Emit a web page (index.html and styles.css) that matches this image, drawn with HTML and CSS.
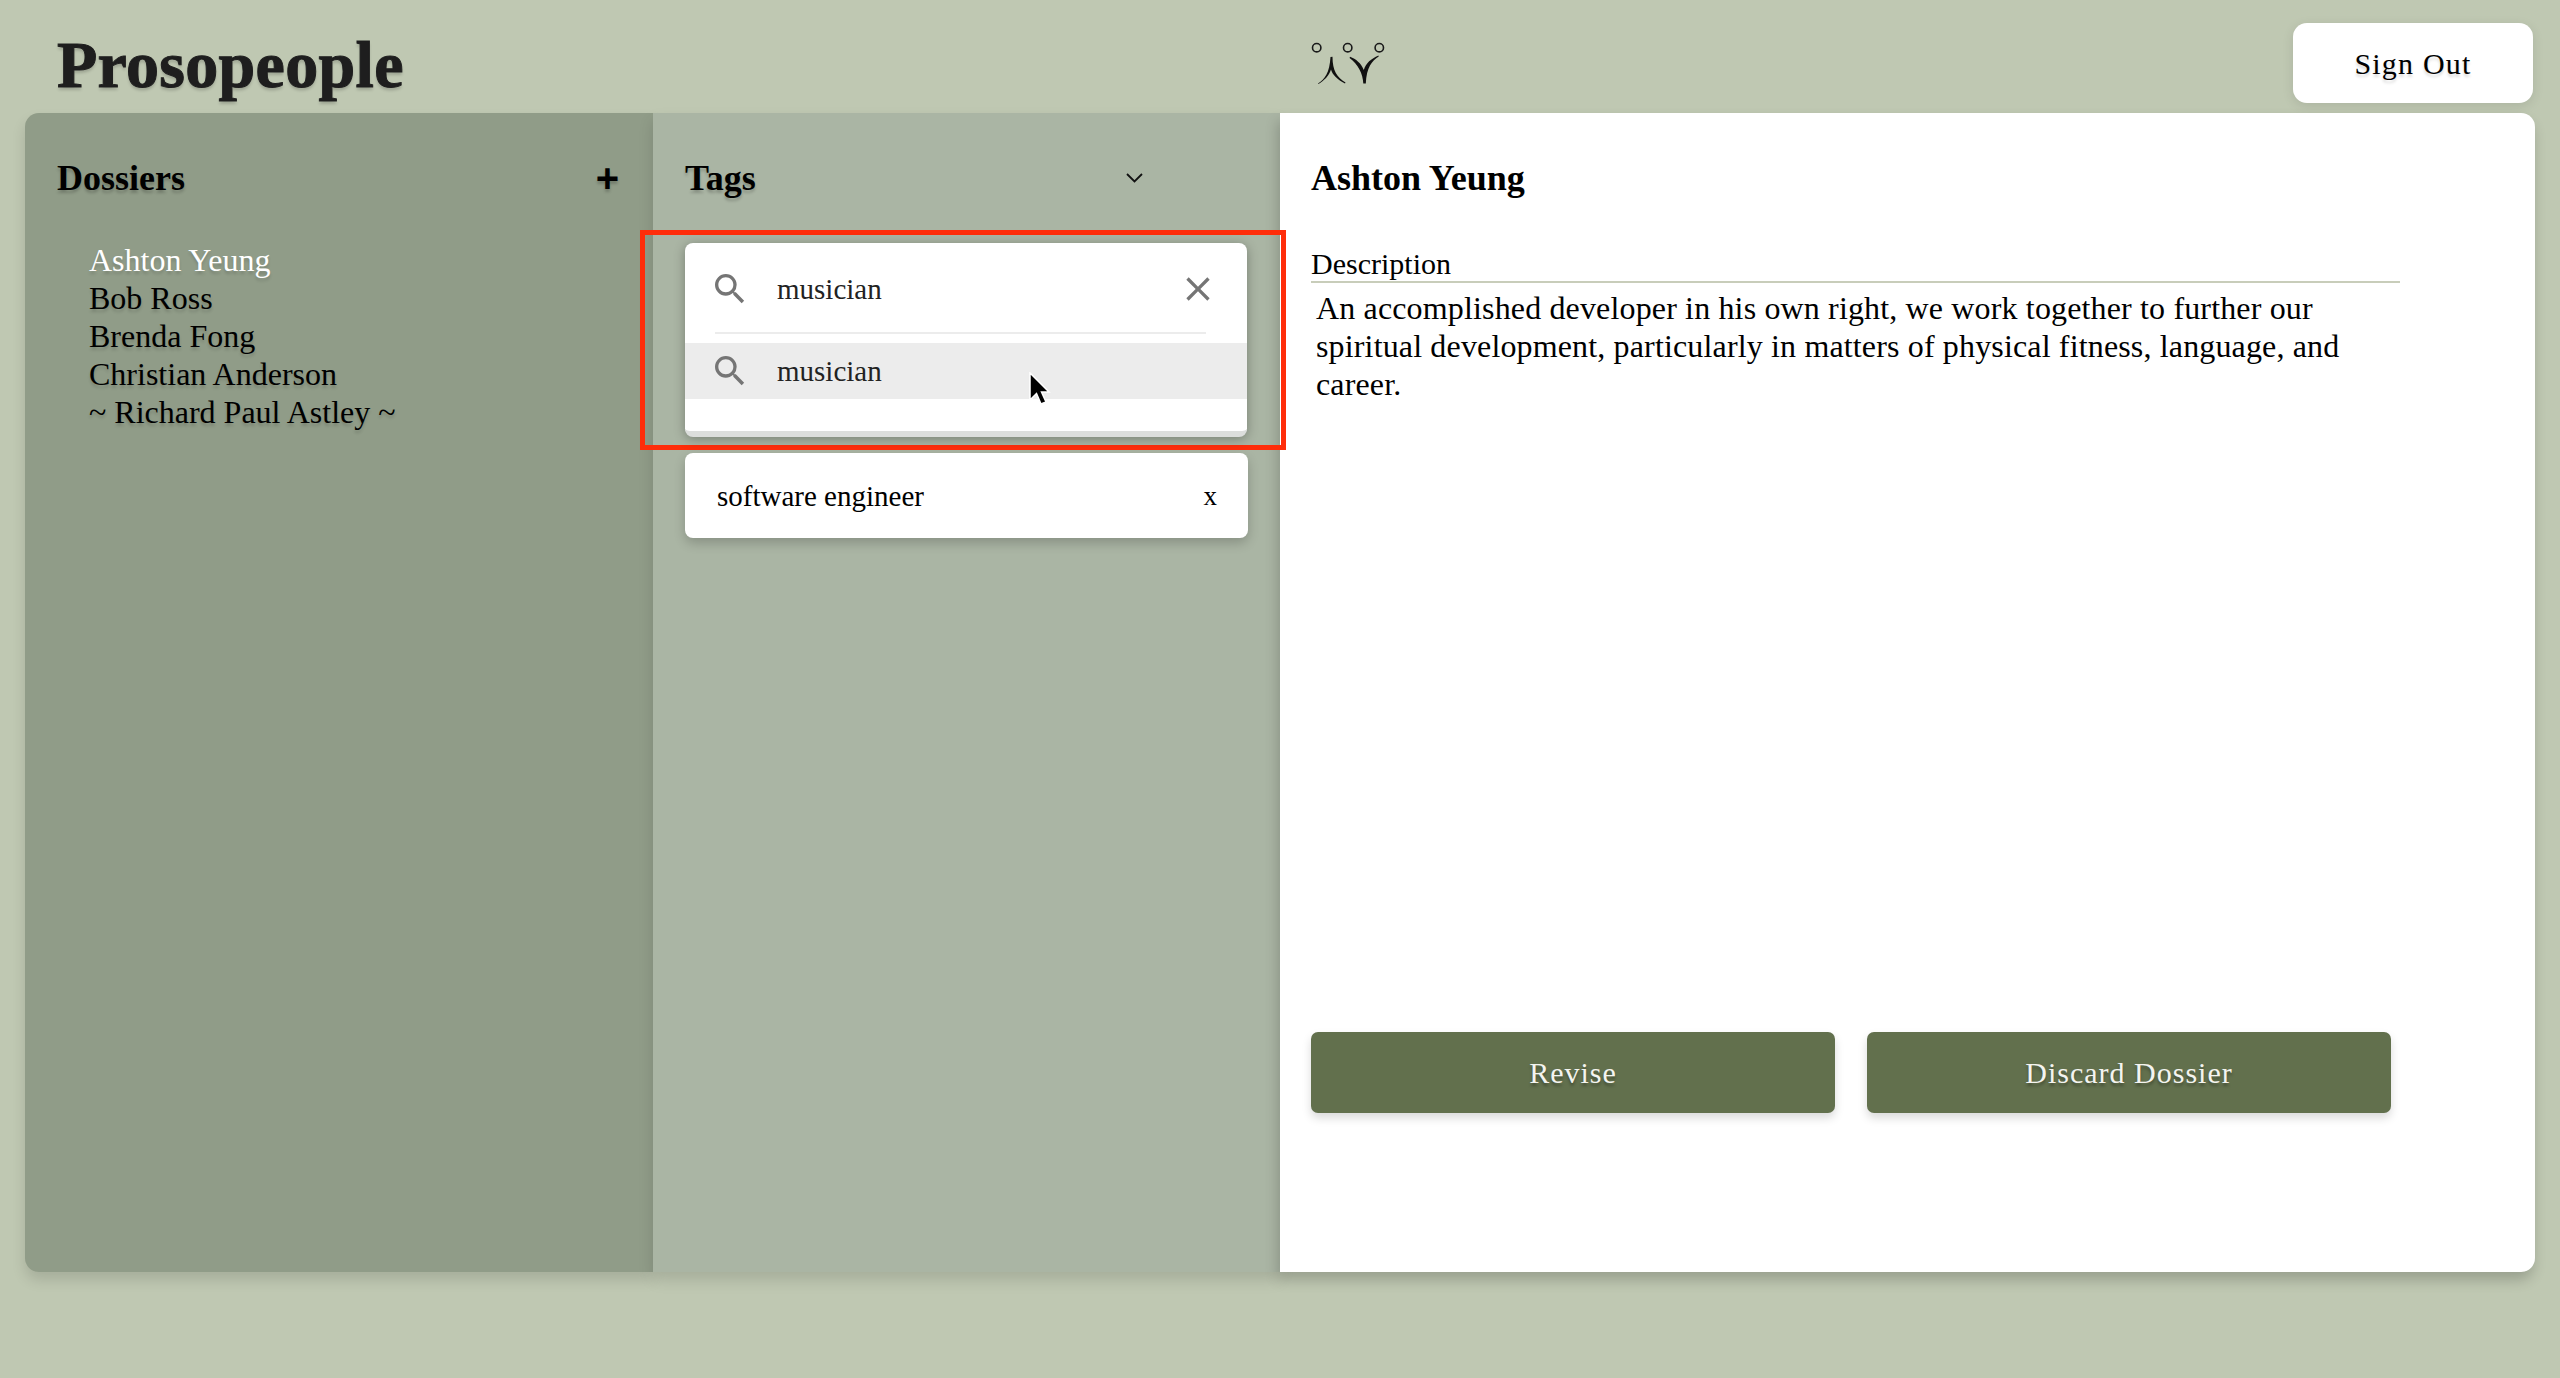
FILE: index.html
```html
<!DOCTYPE html>
<html lang="en">
<head>
  <meta charset="UTF-8" />
  <meta name="viewport" content="width=device-width, initial-scale=1.0"/>
  <title>Prosopeople</title>
  <link rel="stylesheet" href="styles.css">
</head>
<body>

  <header class="topbar">
    <h1 class="brand">Prosopeople</h1>
    <svg class="logo" width="120" height="80" viewBox="0 0 120 80">
      <g fill="none" stroke="#1a1a1a" stroke-width="1.6">
        <circle cx="28.7" cy="24.7" r="4.2"/>
        <circle cx="59.7" cy="24.7" r="4.2"/>
        <circle cx="91.3" cy="24.7" r="4.2"/>
      </g>
      <g fill="#111">
        <path d="M30 60.500C37 56 41.500 50 42.500 34L44.500 33.700C44.500 48 49 54 57.500 59.500L57 60.500C49.500 56.500 44.500 52 43 46.500C41 53 36 57.500 30.400 61Z"/>
        <path d="M62 33.700C68 36 73 40 75.800 47C78 40 83 36 90.500 32.600L90.700 33.400C84 38 78.500 44 77.800 60.500H75.300C75 51 70 41 61.600 35Z"/>
      </g>
    </svg>
    <button class="signout">Sign Out</button>
  </header>

  <main class="board">
    <!-- dossiers -->
    <section class="col col-dossiers">
      <div class="col-head">
        <h2>Dossiers</h2>
        <span class="plus">+</span>
      </div>
      <ul class="names">
        <li class="current">Ashton Yeung</li>
        <li>Bob Ross</li>
        <li>Brenda Fong</li>
        <li>Christian Anderson</li>
        <li>~ Richard Paul Astley ~</li>
      </ul>
    </section>

    <!-- tags -->
    <section class="col col-tags">
      <div class="col-head">
        <h2>Tags</h2>
        <svg class="chevron" width="17" height="10" viewBox="0 0 17 10"><path d="M1 1l7.500 7.500L16 1" fill="none" stroke="#111" stroke-width="1.800"/></svg>
      </div>
      <div class="callout">
        <div class="search">
          <div class="search-row">
            <svg class="ico" width="40" height="40" viewBox="0 0 24 24"><path d="M15.5 14h-.79l-.28-.27A6.471 6.471 0 0 0 16 9.5 6.5 6.5 0 1 0 9.5 16c1.61 0 3.09-.59 4.23-1.57l.27.28v.79l5 4.99L20.49 19l-4.99-5zm-6 0C7.01 14 5 11.99 5 9.5S7.01 5 9.5 5 14 7.01 14 9.5 11.99 14 9.5 14z"/></svg>
            <span class="query">musician</span>
            <svg class="ico" width="40" height="40" viewBox="0 0 24 24"><path d="M19 6.41L17.59 5 12 10.59 6.41 5 5 6.41 10.59 12 5 17.59 6.41 19 12 13.41 17.59 19 19 17.59 13.41 12z"/></svg>
          </div>
          <div class="suggest">
            <svg class="ico" width="40" height="40" viewBox="0 0 24 24"><path d="M15.5 14h-.79l-.28-.27A6.471 6.471 0 0 0 16 9.5 6.5 6.5 0 1 0 9.5 16c1.61 0 3.09-.59 4.23-1.57l.27.28v.79l5 4.99L20.49 19l-4.99-5zm-6 0C7.01 14 5 11.99 5 9.5S7.01 5 9.5 5 14 7.01 14 9.5 11.99 14 9.5 14z"/></svg>
            <span class="query">musician</span>
            <svg class="cursor" width="23" height="34" viewBox="0 0 23 34"><path d="M2 1v27l6.500-6.500L13 32l5-2-4.500-10H21z" stroke="#fff" stroke-width="1.500"/></svg>
          </div>
        </div>
      </div>
      <div class="tag"><span>software engineer</span><span class="tag-x">x</span></div>
    </section>

    <!-- detail -->
    <section class="col col-detail">
      <div class="col-head"><h2 class="plain">Ashton Yeung</h2></div>
      <div class="field-label">Description</div>
      <p class="field-text">An accomplished developer in his own right, we work together to further our spiritual development, particularly in matters of physical fitness, language, and career.</p>
      <div class="actions">
        <button>Revise</button>
        <button>Discard Dossier</button>
      </div>
    </section>
  </main>

</body>
</html>
```

FILE: styles.css
```css
:root {
  --page: #bfc8b2;
  --dossiers: #909c88;
  --tags: #aab5a4;
  --moss: #62704d;
  --serif: "Liberation Serif", serif;
}
* {
  box-sizing: border-box;
}
body {
  margin: 0;
  height: 1378px;
  overflow: hidden;
  background-color: var(--page);
  font-family: var(--serif);
  font-size: 32px;
  color: #000;
}
button {
  font-family: inherit;
  border: none;
  cursor: pointer;
}
.topbar {
  display: flex;
  padding: 23px 27px 10px 57px;
  height: 113px;
}
.brand {
  margin: 2px 0 0;
  width: 1231px;
  font-size: 66px;
  line-height: 80px;
  font-weight: bold;
  letter-spacing: 0.3px;
  color: #1e1e1e;
  -webkit-text-stroke: 1px #1e1e1e;
  text-shadow: 0 3px 3px rgba(0, 0, 0, 0.18);
}
.signout {
  margin-left: auto;
  width: 240px;
  height: 80px;
  padding-top: 3px;
  border-radius: 14px;
  background: white;
  font-size: 30px;
  letter-spacing: 1.2px;
  box-shadow: 0 3px 12px rgba(0, 0, 0, 0.1);
  text-shadow: 0 3px 3px rgba(0, 0, 0, 0.15);
}
.board {
  display: grid;
  grid-template-columns: 628px 627px 1fr;
  height: 1159px;
  margin: 0 25px;
}
.col {
  position: relative;
  padding: 45px 32px 0;
  box-shadow: 0 8px 14px rgba(0, 0, 0, 0.13);
}
.col-dossiers {
  background-color: var(--dossiers);
  border-radius: 14px 0 0 14px;
}
.col-tags {
  background-color: var(--tags);
}
.col-detail {
  display: flex;
  flex-direction: column;
  background-color: white;
  border-radius: 0 14px 14px 0;
  padding-left: 31px;
  box-shadow: -2px 8px 14px rgba(0, 0, 0, 0.2);
}
.col-head {
  display: flex;
  justify-content: space-between;
  align-items: center;
  height: 40px;
}
.col-head h2 {
  margin: 0;
  font-size: 36px;
  font-weight: bold;
  text-shadow: 0 3px 3px rgba(0, 0, 0, 0.2);
}
.col-head h2.plain {
  text-shadow: none;
}
.plus {
  font-family: "Liberation Sans", sans-serif;
  font-weight: bold;
  font-size: 40px;
  line-height: 40px;
  margin-right: 2px;
  text-shadow: 0 3px 3px rgba(0, 0, 0, 0.2);
}
.chevron {
  margin-right: 105px;
}
.names {
  list-style: none;
  margin: 43px 0 0;
  padding: 0 0 0 32px;
}
.names li {
  height: 38px;
  line-height: 38px;
  text-shadow: 0 3px 3px rgba(0, 0, 0, 0.15);
}
.names li.current {
  color: white;
}

/* red box around the search */
.callout {
  position: relative;
  z-index: 2;
  width: 646px;
  margin: 32px 0 0 -45px;
  padding: 8px 34px 8px 40px;
  border: 5px solid #ff2d0a;
}
.search {
  height: 194px;
  background: white;
  border-radius: 8px;
  border-bottom: 6px solid #dcdedc;
  box-shadow: 0 2px 12px rgba(0, 0, 0, 0.3);
  padding-top: 6px;
}
.search-row {
  display: flex;
  align-items: center;
  height: 85px;
  margin: 0 41px 0 30px;
  padding-bottom: 3px;
  border-bottom: 2px solid #ececec;
}
.search-row .ico:first-child {
  margin-left: -5px;
}
.search-row .ico:last-child {
  margin-right: -12px;
}
.ico {
  flex: none;
  fill: #757575;
}
.query {
  flex: 1;
  margin-left: 27px;
  font-size: 29px;
  color: #222;
}
.suggest {
  position: relative;
  display: flex;
  align-items: center;
  height: 56px;
  margin-top: 9px;
  padding-left: 25px;
  background: #ececec;
}
.cursor {
  position: absolute;
  left: 343px;
  top: 29px;
}
.tag {
  display: flex;
  justify-content: space-between;
  align-items: center;
  height: 85px;
  margin-top: 3px;
  padding: 2px 31px 0 32px;
  background: white;
  border-radius: 8px;
  font-size: 29px;
  box-shadow: 0 5px 12px rgba(0, 0, 0, 0.2);
}
.tag-x {
  font-size: 27px;
}
.field-label {
  width: 1089px;
  margin-top: 51px;
  height: 34px;
  line-height: 30px;
  font-size: 30px;
  border-bottom: 2px solid #c8cdba;
}
.field-text {
  width: 1089px;
  margin: 6px 0 0;
  padding-left: 5px;
  line-height: 38px;
  letter-spacing: 0.15px;
}
.actions {
  display: flex;
  gap: 32px;
  margin-top: auto;
  margin-bottom: 159px;
}
.actions button {
  width: 524px;
  height: 81px;
  border-radius: 7px;
  background-color: var(--moss);
  color: #f4f4f0;
  font-size: 30px;
  letter-spacing: 1px;
  box-shadow: 0 5px 10px rgba(0, 0, 0, 0.15);
  text-shadow: 0 3px 3px rgba(0, 0, 0, 0.3);
}
```
